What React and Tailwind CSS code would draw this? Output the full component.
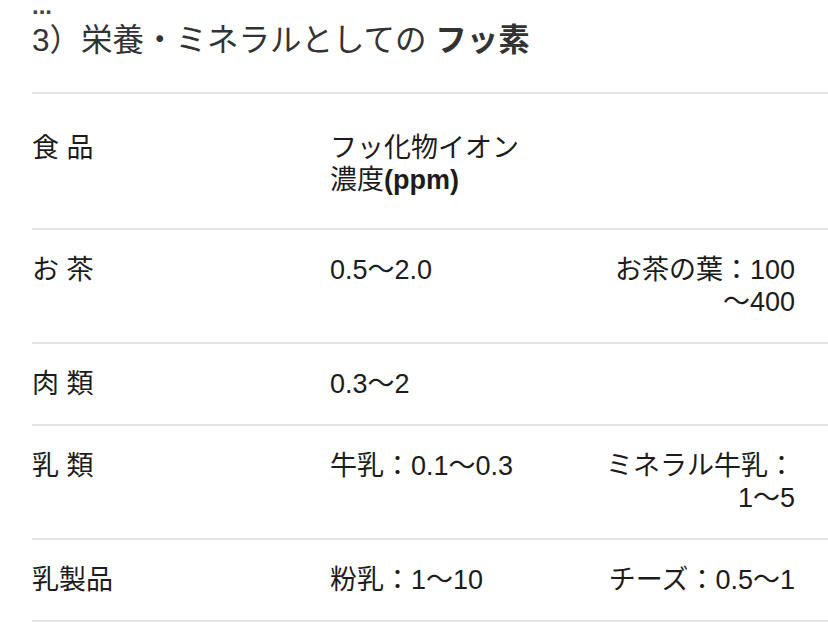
const rows = [
  { food: "お 茶", value: ["0.5～2.0"], note: ["お茶の葉：100", "～400"] },
  { food: "肉 類", value: ["0.3～2"], note: [] },
  { food: "乳 類", value: ["牛乳：0.1～0.3"], note: ["ミネラル牛乳：", "1～5"] },
  { food: "乳製品", value: ["粉乳：1～10"], note: ["チーズ：0.5～1"] },
];

export default function App() {
  return (
    <div
      className="w-[828px] h-[622px] overflow-hidden bg-white pl-8 text-[#1c1c1c]"
      style={{ fontFamily: '"Liberation Sans", "Noto Sans CJK JP", sans-serif' }}
    >
      {/* cut-off text above */}
      <div className="h-[20px] pt-[2px] text-[24px] leading-[8px] font-bold text-[#444]">...</div>

      {/* Heading */}
      <h3 className="text-[31.5px] leading-[40px] text-[#333] pb-[32px] border-b-2 border-[#e4e4e4]">
        3）栄養・ミネラルとしての <span className="font-bold">フッ素</span>
      </h3>

      {/* Table */}
      <div className="text-[27px] leading-[32px]">
        <div className="grid grid-cols-[298px_270px_1fr] pt-[38px] pb-[32px] border-b-2 border-[#e4e4e4]">
          <div>食 品</div>
          <div>
            フッ化物イオン
            <br />
            濃度<span className="font-bold">(ppm)</span>
          </div>
          <div />
        </div>

        {rows.map((row) => (
          <div
            key={row.food}
            className="grid grid-cols-[298px_270px_1fr] py-6 border-b-2 border-[#e4e4e4]"
          >
            <div>{row.food}</div>
            <div>
              {row.value.map((line) => (
                <div key={line}>{line}</div>
              ))}
            </div>
            <div className="text-right pr-[33px]">
              {row.note.map((line) => (
                <div key={line}>{line}</div>
              ))}
            </div>
          </div>
        ))}
      </div>
    </div>
  );
}
